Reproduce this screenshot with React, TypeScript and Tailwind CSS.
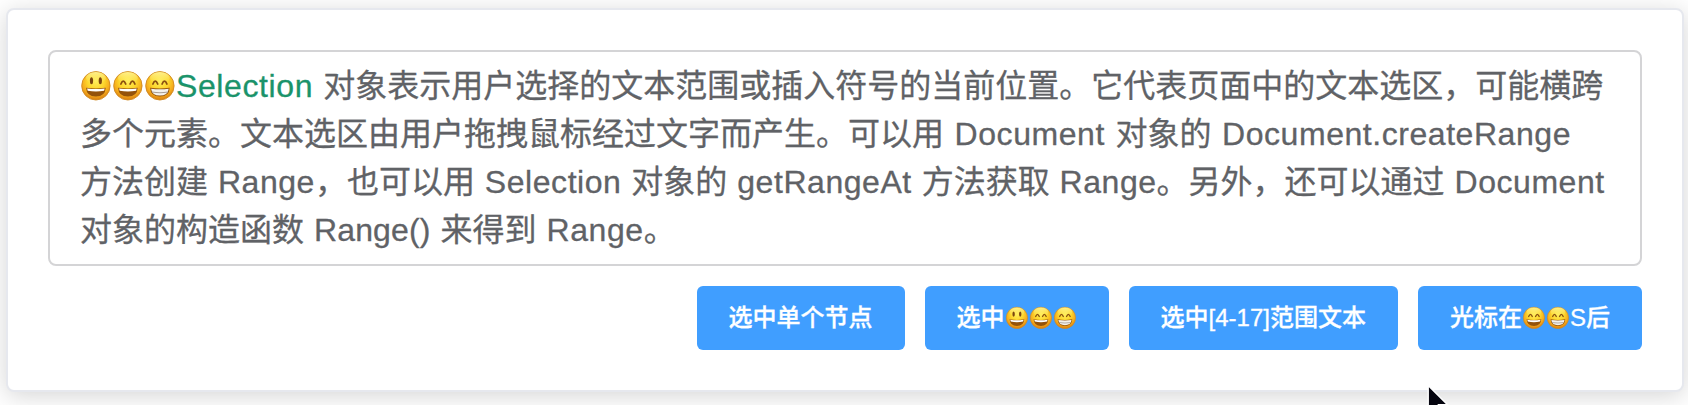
import type { ReactNode } from 'react';

type Face = 'open' | 'smile' | 'beam';

function Emoji({ face, className }: { face: Face; className: string }) {
  return (
    <svg viewBox="0 0 32 32" className={className} aria-hidden="true">
      <defs>
        <radialGradient id="skin" cx="50%" cy="34%" r="66%">
          <stop offset="0%" stopColor="#ffee5a" />
          <stop offset="45%" stopColor="#fdd62c" />
          <stop offset="75%" stopColor="#f5ab1c" />
          <stop offset="100%" stopColor="#d97c0e" />
        </radialGradient>
        <linearGradient id="shine" x1="0" y1="0" x2="0" y2="1">
          <stop offset="0%" stopColor="#fff9b0" stopOpacity="0.75" />
          <stop offset="100%" stopColor="#fff06a" stopOpacity="0" />
        </linearGradient>
      </defs>
      <g transform="translate(0.9 0.2)">
        <circle cx="15" cy="15.6" r="14.2" fill="url(#skin)" stroke="#cf8a24" strokeWidth="0.9" />
        <ellipse cx="15" cy="7.8" rx="10" ry="6" fill="url(#shine)" />
        {face === 'open' ? (
          <g fill="#7a4510">
            <ellipse cx="10.6" cy="10.6" rx="1.6" ry="3.5" />
            <ellipse cx="19.4" cy="10.6" rx="1.6" ry="3.5" />
          </g>
        ) : (
          <g fill="none" stroke="#8a5010" strokeWidth="1.8" strokeLinecap="round" strokeLinejoin="round">
            <path d="M8 13.8 Q10.4 8 12.8 13.8" />
            <path d="M17.2 13.8 Q19.6 8 22 13.8" />
          </g>
        )}
        <path d="M5.2 17.6 Q15 19 24.8 17.6 Q24.4 26.4 15 26.4 Q5.6 26.4 5.2 17.6Z" fill="#94520a" />
        {face === 'beam' ? (
          <g>
            <path d="M6.2 18.5 Q15 19.8 23.8 18.5 Q23 25.4 15 25.4 Q7 25.4 6.2 18.5Z" fill="#f4f1ec" />
            <path d="M7 21.8 Q15 23.2 23 21.8" fill="none" stroke="#a59c94" strokeWidth="1.1" />
          </g>
        ) : (
          <path d="M6.2 18.2 Q15 19.6 23.8 18.2 L23.2 20.6 Q15 22 6.8 20.6Z" fill="#fff" />
        )}
      </g>
    </svg>
  );
}

const inlineFace = 'inline-block size-8 align-[-5px]';
const buttonFace = 'size-6 shrink-0';

function Latin({ children }: { children: ReactNode }) {
  return <span className="tracking-[0.55px]">{children}</span>;
}

function Button({ children }: { children: ReactNode }) {
  return (
    <button
      type="button"
      className="flex h-16 items-center justify-center whitespace-nowrap rounded-[6px] bg-[#409eff] px-8 text-2xl font-medium text-white [-webkit-text-stroke:0.3px_currentColor]"
    >
      {children}
    </button>
  );
}

export default function App() {
  return (
    <div className="relative h-[405px] w-[1688px] overflow-hidden bg-white pl-1.5 pt-2 font-['Liberation_Sans','Noto_Sans_CJK_SC',sans-serif]">
      <main className="h-[384px] w-[1678px] rounded-lg border-2 border-[#e6e8ee] bg-white p-10 shadow-[0_4px_24px_rgba(0,0,0,0.17)]">
        <div className="h-[216px] rounded-lg border-2 border-[#d4d4d6] py-[10px] pl-[30px] text-[32px] leading-[48px] text-[#606266] [-webkit-text-stroke:0.3px_currentColor] [word-spacing:1.2px]">
          <p className="whitespace-nowrap">
            <Emoji face="open" className={inlineFace} />
            <Emoji face="smile" className={inlineFace} />
            <Emoji face="beam" className={inlineFace} />
            <span className="tracking-[0.6px] text-[#1a936a]">Selection</span>{' '}
            对象表示用户选择的文本范围或插入符号的当前位置。它代表页面中的文本选区，可能横跨
          </p>
          <p className="whitespace-nowrap [word-spacing:1.7px]">
            多个元素。文本选区由用户拖拽鼠标经过文字而产生。可以用 <Latin>Document</Latin> 对象的 <Latin>Document.createRange</Latin>
          </p>
          <p className="whitespace-nowrap [word-spacing:1px]">
            方法创建 <Latin>Range</Latin>，也可以用 <Latin>Selection</Latin> 对象的 <Latin>getRangeAt</Latin> 方法获取 <Latin>Range</Latin>。另外，还可以通过 <Latin>Document</Latin>
          </p>
          <p className="whitespace-nowrap">
            对象的构造函数 <span className="tracking-[0.1px]">Range()</span> 来得到 <Latin>Range</Latin>。
          </p>
        </div>
        <div className="mt-5 flex justify-end gap-5">
          <Button>选中单个节点</Button>
          <Button>
            选中
            <Emoji face="open" className={buttonFace} />
            <Emoji face="smile" className={buttonFace} />
            <Emoji face="beam" className={buttonFace} />
          </Button>
          <Button>选中[4-17]范围文本</Button>
          <Button>
            光标在
            <Emoji face="smile" className={buttonFace} />
            <Emoji face="beam" className={buttonFace} />
            S后
          </Button>
        </div>
      </main>
      <svg viewBox="0 0 28 40" className="absolute left-[1425px] top-[382px] h-10 w-7" aria-hidden="true">
        <path d="M3.2 3.5 V34 L10 27 L14 36 L18 34 L13.5 22.8 H22.6Z" fill="#05050f" stroke="#fff" strokeWidth="1.4" />
      </svg>
    </div>
  );
}
